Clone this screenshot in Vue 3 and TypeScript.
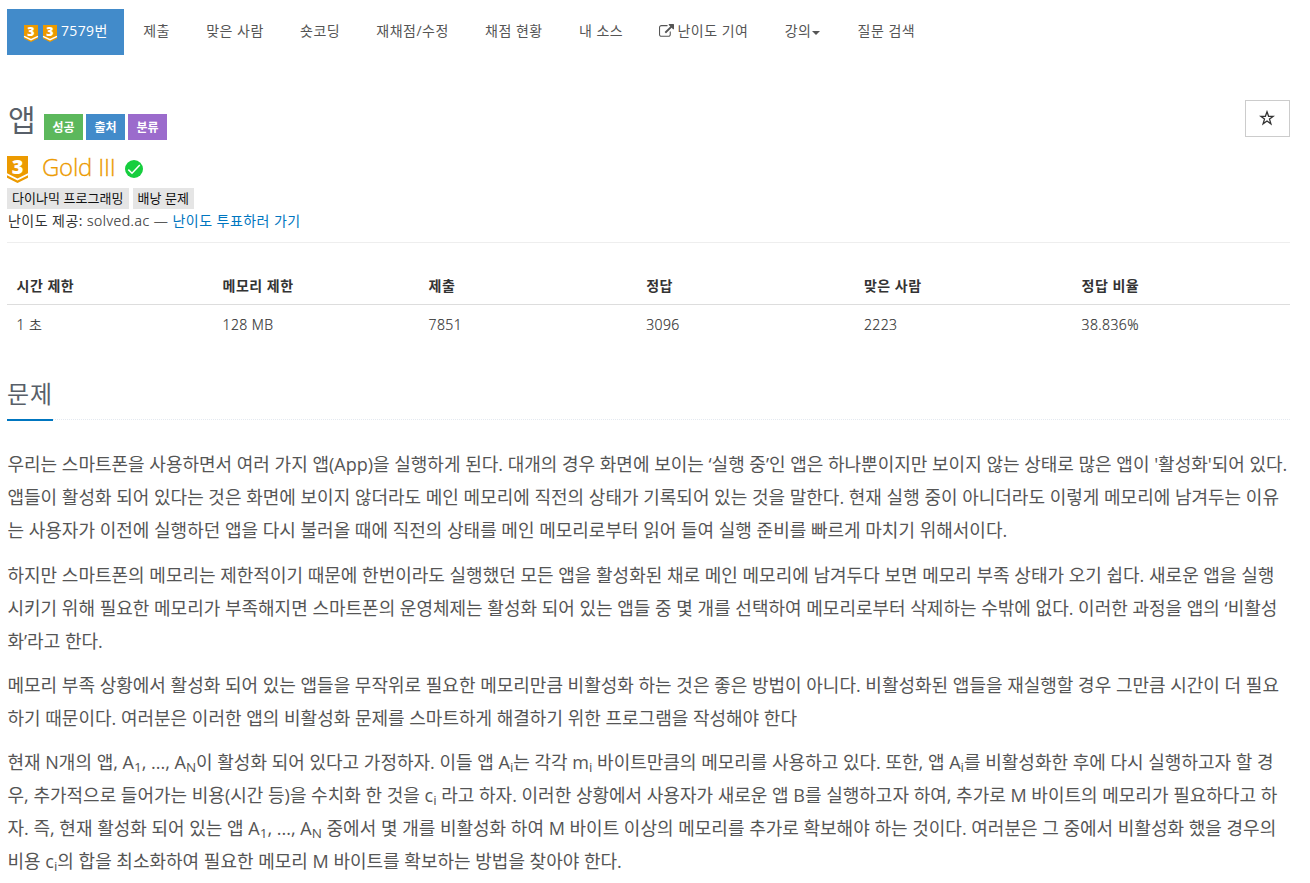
<script setup lang="ts">
interface NavItem {
  label: string
  icon?: 'external'
  caret?: boolean
}

const navItems: NavItem[] = [
  { label: '제출' },
  { label: '맞은 사람' },
  { label: '숏코딩' },
  { label: '재채점/수정' },
  { label: '채점 현황' },
  { label: '내 소스' },
  { label: '난이도 기여', icon: 'external' },
  { label: '강의', caret: true },
  { label: '질문 검색' },
]

const labels = [
  { text: '성공', kind: 'success' },
  { text: '출처', kind: 'source' },
  { text: '분류', kind: 'category' },
]

const tags = ['다이나믹 프로그래밍', '배낭 문제']

const stats = [
  { head: '시간 제한', value: '1 초' },
  { head: '메모리 제한', value: '128 MB' },
  { head: '제출', value: '7851' },
  { head: '정답', value: '3096' },
  { head: '맞은 사람', value: '2223' },
  { head: '정답 비율', value: '38.836%' },
]

// Underscore marks the next character as a subscript.
const paragraphs: string[][] = [
  [
    "우리는 스마트폰을 사용하면서 여러 가지 앱(App)을 실행하게 된다. 대개의 경우 화면에 보이는 ‘실행 중’인 앱은 하나뿐이지만 보이지 않는 상태로 많은 앱이 '활성화'되어 있다.",
    '앱들이 활성화 되어 있다는 것은 화면에 보이지 않더라도 메인 메모리에 직전의 상태가 기록되어 있는 것을 말한다. 현재 실행 중이 아니더라도 이렇게 메모리에 남겨두는 이유',
    '는 사용자가 이전에 실행하던 앱을 다시 불러올 때에 직전의 상태를 메인 메모리로부터 읽어 들여 실행 준비를 빠르게 마치기 위해서이다.',
  ],
  [
    '하지만 스마트폰의 메모리는 제한적이기 때문에 한번이라도 실행했던 모든 앱을 활성화된 채로 메인 메모리에 남겨두다 보면 메모리 부족 상태가 오기 쉽다. 새로운 앱을 실행',
    '시키기 위해 필요한 메모리가 부족해지면 스마트폰의 운영체제는 활성화 되어 있는 앱들 중 몇 개를 선택하여 메모리로부터 삭제하는 수밖에 없다. 이러한 과정을 앱의 ‘비활성',
    '화’라고 한다.',
  ],
  [
    '메모리 부족 상황에서 활성화 되어 있는 앱들을 무작위로 필요한 메모리만큼 비활성화 하는 것은 좋은 방법이 아니다. 비활성화된 앱들을 재실행할 경우 그만큼 시간이 더 필요',
    '하기 때문이다. 여러분은 이러한 앱의 비활성화 문제를 스마트하게 해결하기 위한 프로그램을 작성해야 한다',
  ],
  [
    '현재 N개의 앱, A_1, ..., A_N이 활성화 되어 있다고 가정하자. 이들 앱 A_i는 각각 m_i 바이트만큼의 메모리를 사용하고 있다. 또한, 앱 A_i를 비활성화한 후에 다시 실행하고자 할 경',
    '우, 추가적으로 들어가는 비용(시간 등)을 수치화 한 것을 c_i 라고 하자. 이러한 상황에서 사용자가 새로운 앱 B를 실행하고자 하여, 추가로 M 바이트의 메모리가 필요하다고 하',
    '자. 즉, 현재 활성화 되어 있는 앱 A_1, ..., A_N 중에서 몇 개를 비활성화 하여 M 바이트 이상의 메모리를 추가로 확보해야 하는 것이다. 여러분은 그 중에서 비활성화 했을 경우의',
    '비용 c_i의 합을 최소화하여 필요한 메모리 M 바이트를 확보하는 방법을 찾아야 한다.',
  ],
]

interface Piece {
  text: string
  sub: boolean
}

function split(line: string): Piece[] {
  return line
    .split(/(_.)/)
    .filter((part) => part.length > 0)
    .map((part) => ({ text: part.replace('_', ''), sub: part.startsWith('_') }))
}
</script>

<template>
  <main class="page">
    <nav class="menu">
      <a class="item active">
        <svg v-for="n in 2" :key="n" class="tier-small" viewBox="0 0 14 17">
          <path d="M0 0h14v13.500L7 17l-7-3.500z" fill="#ec9a00" />
          <path d="M0 11.300l7 3.400 7-3.400" fill="none" stroke="#fff" stroke-width="1.300" />
          <text x="7" y="11" text-anchor="middle">3</text>
        </svg>
        <span>7579번</span>
      </a>
      <a v-for="item in navItems" :key="item.label" class="item">
        <svg v-if="item.icon" class="external" viewBox="0 0 1792 1792">
          <path
            fill="currentColor"
            d="M1408 928v320q0 119-84.500 203.500T1120 1536H288q-119 0-203.500-84.500T0 1248V416q0-119 84.500-203.500T288 128h704q14 0 23 9t9 23v64q0 14-9 23t-23 9H288q-66 0-113 47t-47 113v832q0 66 47 113t113 47h832q66 0 113-47t47-113V928q0-14 9-23t23-9h64q14 0 23 9t9 23zm384-864v512q0 26-19 45t-45 19-45-19l-176-176-652 652q-10 10-23 10t-23-10L695 983q-10-10-10-23t10-23l652-652-176-176q-19-19-19-45t19-45 45-19h512q26 0 45 19t19 45z"
          />
        </svg>
        <span>{{ item.label }}</span>
        <i v-if="item.caret" class="caret"></i>
      </a>
    </nav>

    <header class="title-row">
      <h1>앱</h1>
      <span v-for="l in labels" :key="l.text" class="label" :class="l.kind">{{ l.text }}</span>
      <button class="favorite" type="button" aria-label="즐겨찾기">
        <svg class="star" viewBox="0 0 16 16">
          <path
            d="M8 1.800l1.600 4.500h4.600l-3.700 2.800 1.400 4.700L8 11l-3.900 2.800 1.400-4.700-3.700-2.800h4.600z"
            fill="none"
            stroke="#333"
            stroke-width="1.300"
          />
        </svg>
      </button>
    </header>

    <div class="tier-row">
      <svg class="tier" viewBox="0 0 21 27">
        <path d="M0 0h21v17.300l-10.500 5.200L0 17.300z" fill="#ec9a00" />
        <path d="M0 19.300v2.400L10.500 27 21 21.700v-2.400l-10.500 5.200z" fill="#ec9a00" />
        <text x="10.500" y="17.500" text-anchor="middle">3</text>
      </svg>
      <span class="tier-name">Gold III</span>
      <svg class="check" viewBox="0 0 18 18">
        <circle cx="9" cy="9" r="9" fill="#16ce3e" />
        <path d="M3.300 9.600l3.700 3.600L14.800 5.100" fill="none" stroke="#fff" stroke-width="1.500" />
      </svg>
    </div>

    <div class="tags">
      <span v-for="t in tags" :key="t" class="tag">{{ t }}</span>
    </div>
    <p class="provider">난이도 제공: <span class="site">solved.ac —</span> <a>난이도 투표하러 가기</a></p>

    <table class="stats">
      <thead>
        <tr>
          <th v-for="s in stats" :key="s.head">{{ s.head }}</th>
        </tr>
      </thead>
      <tbody>
        <tr>
          <td v-for="s in stats" :key="s.head">{{ s.value }}</td>
        </tr>
      </tbody>
    </table>

    <div class="headline"><h2>문제</h2></div>

    <section class="description">
      <p v-for="(lines, p) in paragraphs" :key="p">
        <span v-for="(line, i) in lines" :key="i" class="line"><template
          v-for="(piece, k) in split(line)" :key="k"
        ><sub v-if="piece.sub">{{ piece.text }}</sub><template v-else>{{ piece.text }}</template></template></span>
      </p>
    </section>
  </main>
</template>

<style>
body {
  margin: 0;
  background: #fff;
  overflow: hidden;
}
</style>

<style scoped>
.page {
  box-sizing: border-box;
  width: 1310px;
  height: 883px;
  padding: 9px 20px 0 7px;
  overflow: hidden;
  font-family: 'Open Sans', 'Noto Sans CJK KR', sans-serif;
  font-size: 14px;
  line-height: 20px;
  color: #333;
}

.menu {
  display: flex;
  height: 46px;
  gap: 2.200px;
}

.item {
  display: flex;
  align-items: center;
  padding: 0 17px;
  color: #555;
  letter-spacing: 0.5px;
  white-space: nowrap;
}

.item span {
  margin-top: -1px;
}

.active {
  box-sizing: border-box;
  width: 117px;
  padding: 0 0 0 17px;
  background: #428bca;
  color: #fff;
  letter-spacing: 0.35px;
}

.tier-small {
  flex: none;
  width: 14px;
  height: 17px;
  margin: 2px 4.500px 0 0;
  overflow: visible;
}

.tier-small text,
.tier text {
  fill: #fff;
  font-family: 'Open Sans', sans-serif;
  font-weight: 800;
  letter-spacing: 0;
}

.tier-small text {
  font-size: 12.500px;
}

.tier text {
  font-size: 20px;
}

.item span {
  position: relative;
  top: -0.500px;
}

.external {
  width: 15px;
  height: 15px;
  margin: -1px 3px 0 0;
}

.caret {
  margin: 2px 0 0 1px;
  border: 4.500px solid transparent;
  border-top-color: currentColor;
  border-bottom: 0;
}

.item:last-child {
  margin-left: 1px;
}

.title-row {
  display: flex;
  align-items: flex-start;
  height: 54px;
  margin-top: 45px;
}

h1 {
  box-sizing: border-box;
  width: 37px;
  margin: 0;
  padding-left: 1px;
  font-size: 30px;
  font-weight: 400;
  line-height: 40px;
  color: #585f69;
}

.label {
  width: 39px;
  height: 26px;
  margin: 14px 3px 0 0;
  font-size: 12px;
  font-weight: 700;
  line-height: 27px;
  text-align: center;
  color: #fff;
}

.success {
  background: #5cb85c;
}

.source {
  background: #428bca;
}

.category {
  background: #9b6bcc;
}

.favorite {
  display: flex;
  align-items: center;
  justify-content: center;
  box-sizing: border-box;
  width: 45px;
  height: 37px;
  margin-left: auto;
  padding: 0 1px 1px 0;
  border: 1px solid #ccc;
  background: #fff;
}

.star {
  width: 16px;
  height: 16px;
}

.tier-row {
  display: flex;
  align-items: center;
  height: 32px;
}

.tier {
  width: 21px;
  height: 27px;
  margin-top: -1px;
  overflow: visible;
}

.tier-name {
  margin: -6px 9px 0 14px;
  font-size: 24px;
  font-weight: 300;
  line-height: 32px;
  letter-spacing: -0.25px;
  color: #ec9a00;
  -webkit-text-stroke: 0.3px #ec9a00;
}

.check {
  width: 18px;
  height: 18px;
  margin-top: -3px;
}

.tags {
  display: flex;
  gap: 4px;
  margin-top: 2px;
}

.tag {
  padding: 0 5px;
  background: #e5e5e5;
  color: #111;
  font-size: 13px;
  line-height: 20px;
  height: 21px;
  letter-spacing: 0.05px;
}

.provider {
  height: 33px;
  margin: 0;
  padding-left: 1px;
  border-bottom: 1px solid #eee;
  line-height: 23px;
  letter-spacing: 0.45px;
  color: #333;
}

.site {
  font-weight: 300;
  letter-spacing: 0.550px;
  -webkit-text-stroke: 0.2px currentColor;
}

.provider a {
  color: #0076c0;
}

.stats {
  width: 1282px;
  margin-top: 23px;
  border-spacing: 0;
  table-layout: fixed;
}

.stats th,
.stats td {
  box-sizing: border-box;
  width: 217.700px;
  padding: 0 0 0 9.500px;
  text-align: left;
  height: 39px;
  letter-spacing: 0.5px;
}

.stats th {
  padding-top: 1px;
  border-bottom: 1px solid #ddd;
}

.stats td {
  font-weight: 300;
  letter-spacing: 0.4px;
  -webkit-text-stroke: 0.2px currentColor;
}

.stats th:nth-child(-n + 2) {
  width: 206px;
}

.headline {
  height: 46px;
  margin-top: 29px;
  border-bottom: 1px dotted #e4e9f0;
}

h2 {
  display: inline-block;
  height: 46px;
  margin: 0;
  border-bottom: 2px solid #0076c0;
  font-size: 24px;
  font-weight: 400;
  line-height: 42px;
  letter-spacing: 0.9px;
  color: #585f69;
}

.description {
  margin-top: 28px;
  padding-left: 0.500px;
  font-size: 18px;
  line-height: 33px;
  color: #555;
}

.description p {
  margin: 0 0 11.300px;
}

.description p:first-child {
  margin-bottom: 12px;
}

.description p:nth-child(2) {
  margin-bottom: 10.600px;
}

.line {
  display: block;
  height: 33px;
  white-space: nowrap;
}

sub {
  position: relative;
  bottom: -3.500px;
  font-size: 75%;
  line-height: 0;
  vertical-align: baseline;
}
</style>
